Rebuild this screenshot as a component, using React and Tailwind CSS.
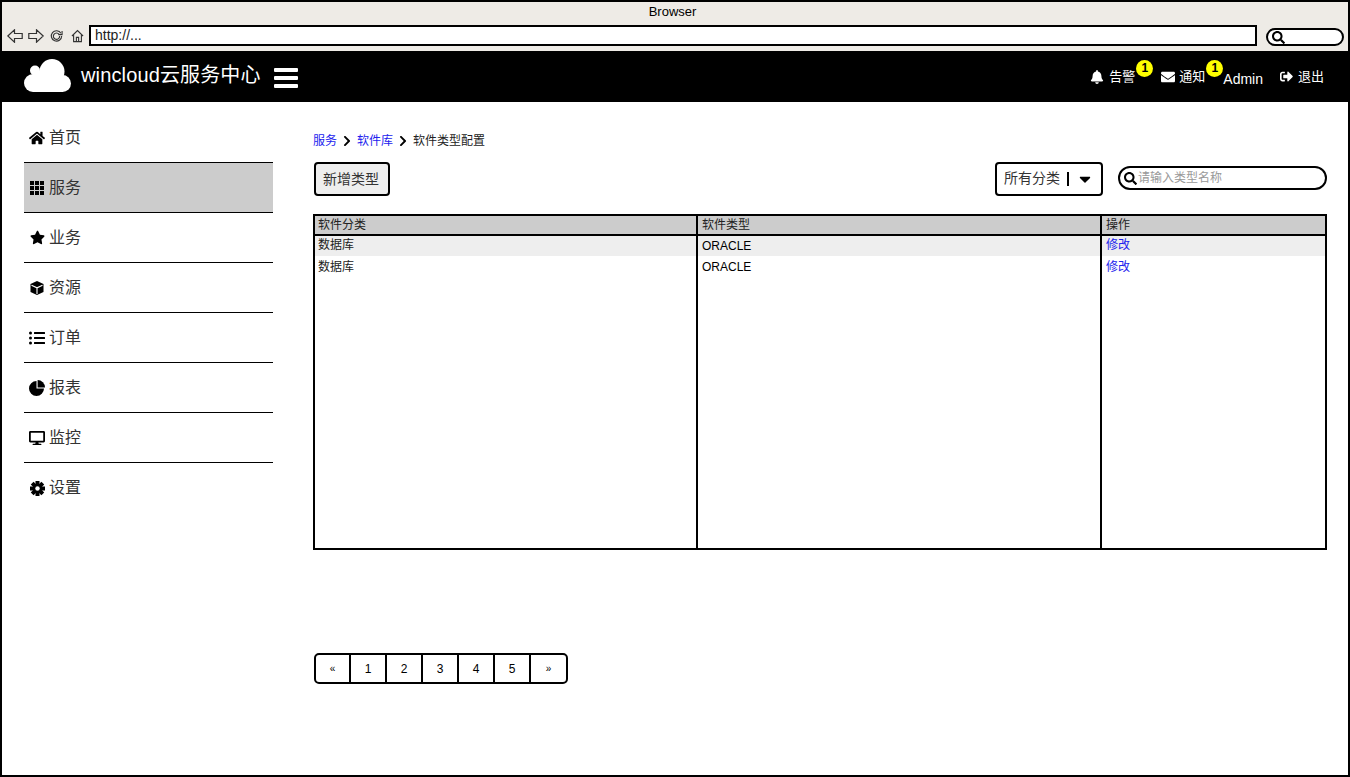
import React from 'react';
import {
    FaBell, FaEnvelope, FaSearch, FaChevronRight, FaHome, FaStar,
    FaListUl, FaDesktop, FaSignOutAlt, FaCaretDown,
} from 'react-icons/fa';

const FONT = 'font-["Liberation_Sans","Noto_Sans_CJK_SC",sans-serif]';

const ThIcon = () => (
    <svg width="14" height="14" viewBox="0 0 14 14" fill="currentColor">
        {[0, 5, 10].map((y) => [0, 5, 10].map((x) => (
            <rect key={`${x}-${y}`} x={x} y={y} width="4" height="4" />
        )))}
    </svg>
);

const CubeIcon = () => (
    <svg width="14" height="14" viewBox="0 0 14 14">
        <path d="M7 0 L13.5 3 V11 L7 14 L0.5 11 V3 Z" fill="currentColor" />
        <path d="M1.5 4.2 L7 6.8 L12.5 4.2 M7 6.8 V13" fill="none" stroke="#fff" strokeWidth="1.1" />
    </svg>
);

const PieIcon = () => (
    <svg width="16" height="16" viewBox="0 0 16 16" fill="currentColor">
        <path d="M7.5 1 A7.5 7.5 0 1 0 15 8.5 H7.5 Z" />
        <path d="M8.6 0 A7.4 7.4 0 0 1 16 7.4 H8.6 Z" />
    </svg>
);

const GearIcon = () => (
    <svg width="15" height="15" viewBox="0 0 15 15">
        {[0, 45, 90, 135].map((deg) => (
            <rect key={deg} x="5.5" y="0" width="4" height="15" fill="currentColor" transform={`rotate(${deg} 7.5 7.5)`} />
        ))}
        <circle cx="7.5" cy="7.5" r="4.6" fill="currentColor" />
        <circle cx="7.5" cy="7.5" r="2.2" fill="#fff" />
    </svg>
);

const CloudIcon = () => (
    <svg width="47" height="33" viewBox="0 0 47 33" fill="#fff" className="ml-[22px] mb-[3px]">
        <circle cx="28" cy="12.5" r="12.5" />
        <circle cx="11" cy="11.5" r="5" />
        <circle cx="9" cy="24" r="9" />
        <circle cx="38.5" cy="24.5" r="8.5" />
        <rect x="9" y="12" width="30" height="21" />
    </svg>
);

const menuItems = [
    { label: '首页', icon: <FaHome className="text-[16px]" /> },
    { label: '服务', icon: <ThIcon />, active: true },
    { label: '业务', icon: <FaStar className="text-[15px]" /> },
    { label: '资源', icon: <CubeIcon /> },
    { label: '订单', icon: <FaListUl className="text-[16px]" /> },
    { label: '报表', icon: <PieIcon /> },
    { label: '监控', icon: <FaDesktop className="text-[16px]" /> },
    { label: '设置', icon: <GearIcon /> },
];

const rows = [
    { category: '数据库', type: 'ORACLE' },
    { category: '数据库', type: 'ORACLE' },
];

const pages = ['«', '1', '2', '3', '4', '5', '»'];

const BrowserIcons = () => (
    <div className="flex items-center w-[87px] pl-[5px] shrink-0">
        <svg width="16" height="14" viewBox="0 0 16 14" fill="none" stroke="#333" strokeWidth="1.2">
            <path d="M0.8 7 L7.5 0.8 V4.5 H15.2 V9.5 H7.5 V13.2 Z" />
        </svg>
        <svg width="16" height="14" viewBox="0 0 16 14" fill="none" stroke="#333" strokeWidth="1.2" className="ml-[5px]">
            <path d="M15.2 7 L8.5 0.8 V4.5 H0.8 V9.5 H8.5 V13.2 Z" />
        </svg>
        <svg width="13" height="14" viewBox="0 0 14 14" fill="none" stroke="#333" strokeWidth="1.2" className="ml-[6px]">
            <path d="M11.8 4 A5.6 5.6 0 1 0 12.6 7" />
            <path d="M9.8 5.3 A3.4 3.4 0 1 0 10.4 7" />
            <path d="M9 5.5 H13 V1.5" />
        </svg>
        <svg width="13" height="14" viewBox="0 0 14 14" fill="none" stroke="#333" strokeWidth="1.2" className="ml-[8px]">
            <path d="M1 7 L7 1.2 L13 7" />
            <path d="M2.8 6 V13 H11.2 V6" />
            <path d="M5.8 13 V8.5 H8.2 V13" />
        </svg>
    </div>
);

const Badge = () => (
    <span className="absolute w-[17px] h-[17px] rounded-full bg-[#ffff00] text-black text-[12px] font-bold leading-[17px] text-center -top-[7px] -right-[18px]">
        1
    </span>
);

const SearchPill = ({ className, placeholder }) => (
    <div className={`flex items-center border-2 border-black rounded-full bg-white ${className}`}>
        <FaSearch className="text-black text-[13px] ml-[4px] shrink-0" />
        {placeholder && <span className="ml-px text-[12px] text-[#999]">{placeholder}</span>}
    </div>
);

const App = () => {
    return (
        <div className={`w-[1350px] h-[777px] border-2 border-black bg-white flex flex-col overflow-hidden ${FONT}`}>
            <div className="h-[49px] bg-[#eeebe6] shrink-0 flex flex-col">
                <div className="h-[21px] pt-[2px] pr-[5px] text-center text-[13px] leading-[16px] text-black">Browser</div>
                <div className="flex items-center h-[21px] mt-[2px]">
                    <BrowserIcons />
                    <div className="w-[1168px] h-[21px] border-2 border-black bg-white text-[14px] leading-[16px] pl-[4px] text-[#222]">http://...</div>
                    <SearchPill className="w-[78px] h-[18px] ml-[9px] mt-[3px]" />
                </div>
            </div>

            <div className="h-[51px] bg-black shrink-0 flex items-center text-white">
                <CloudIcon />
                <span className="ml-[10px] text-[20px] leading-none mb-[3px] tracking-[0.14px]">wincloud云服务中心</span>
                <div className="ml-[13px] mt-[2px] flex flex-col gap-[4px]">
                    <div className="w-[24px] h-[4px] bg-white rounded-[1px]" />
                    <div className="w-[24px] h-[4px] bg-white rounded-[1px]" />
                    <div className="w-[24px] h-[4px] bg-white rounded-[1px]" />
                </div>
                <div className="ml-auto flex items-center text-[13px] pr-[24px]">
                    <FaBell className="text-[14px]" />
                    <span className="relative ml-[5px]">告警<Badge /></span>
                    <FaEnvelope className="text-[14px] ml-[26px]" />
                    <span className="relative ml-[4px]">通知<Badge /></span>
                    <span className="ml-[18px] mt-[5px] text-[14px]">Admin</span>
                    <FaSignOutAlt className="text-[13px] ml-[17px]" />
                    <span className="ml-[5px]">退出</span>
                </div>
            </div>

            <div className="flex flex-1 min-h-0">
                <nav className="w-[249px] ml-[22px] mt-[11px] shrink-0">
                    {menuItems.map(({ label, icon, active }, i) => (
                        <div
                            key={label}
                            className={`h-[50px] flex items-center pl-[5px] text-[16px] text-[#333] ${i < menuItems.length - 1 ? 'border-b border-black' : ''} ${active ? 'bg-[#cccccc]' : ''}`}
                        >
                            <span className="w-[16px] flex justify-center text-black">{icon}</span>
                            <span className="ml-[4px]">{label}</span>
                        </div>
                    ))}
                </nav>

                <main className="ml-[40px] w-[1014px]">
                    <div className="flex items-center h-[16px] mt-[31px] text-[12px] text-[#222]">
                        <span className="text-[#2222ee]">服务</span>
                        <FaChevronRight className="text-[12px] text-black mx-[4px]" />
                        <span className="text-[#2222ee]">软件库</span>
                        <FaChevronRight className="text-[12px] text-black mx-[4px]" />
                        <span>软件类型配置</span>
                    </div>

                    <div className="flex items-center mt-[13px] h-[34px]">
                        <button className="ml-px w-[76px] h-[34px] border-2 border-black rounded-[4px] bg-[#eeeeee] pr-[2px] text-[14px] text-[#333]">新增类型</button>
                        <div className="ml-auto w-[108px] h-[34px] border-2 border-black rounded-[4px] flex items-center pl-[7px] pb-px text-[14px] text-[#333]">
                            所有分类
                            <span className="w-[2px] h-[14px] bg-black ml-[7px]" />
                            <FaCaretDown className="text-[18px] text-black ml-[7px]" />
                        </div>
                        <SearchPill className="w-[209px] h-[24px] ml-[15px] mb-[2px]" placeholder="请输入类型名称" />
                    </div>

                    <div className="mt-[18px] h-[336px] border-2 border-black grid grid-cols-[383px_404px_1fr] text-[12px] text-[#222]">
                        <div className="border-r-2 border-black">
                            <div className="h-[20px] bg-[#cccccc] border-b-2 border-black pl-[3px] leading-[18px]">软件分类</div>
                            {rows.map((row, i) => (
                                <div key={i} className={`h-[20px] pl-[3px] leading-[19px] ${i === 0 ? 'bg-[#eeeeee]' : 'pt-[2px]'}`}>{row.category}</div>
                            ))}
                        </div>
                        <div className="border-r-2 border-black">
                            <div className="h-[20px] bg-[#cccccc] border-b-2 border-black pl-[4px] leading-[18px]">软件类型</div>
                            {rows.map((row, i) => (
                                <div key={i} className={`h-[20px] pl-[4px] leading-[20px] text-black ${i === 0 ? 'bg-[#eeeeee]' : 'pt-px'}`}>{row.type}</div>
                            ))}
                        </div>
                        <div>
                            <div className="h-[20px] bg-[#cccccc] border-b-2 border-black pl-[4px] leading-[18px]">操作</div>
                            {rows.map((_, i) => (
                                <div key={i} className={`h-[20px] pl-[4px] leading-[19px] text-[#2222ee] ${i === 0 ? 'bg-[#eeeeee]' : 'pt-[2px]'}`}>修改</div>
                            ))}
                        </div>
                    </div>

                    <div className="mt-[103px] ml-px w-[254px] h-[31px] border-2 border-black rounded-[5px] flex text-[12px] text-black">
                        {pages.map((page, i) => {
                            const isEnd = i === 0 || i === pages.length - 1;
                            return (
                                <div
                                    key={page}
                                    className={`flex items-center justify-center ${isEnd ? 'w-[35px] text-[10px]' : 'w-[36px]'} ${i < pages.length - 1 ? 'border-r-2 border-black' : ''}`}
                                >
                                    {page}
                                </div>
                            );
                        })}
                    </div>
                </main>
            </div>
        </div>
    );
};

export default App;
